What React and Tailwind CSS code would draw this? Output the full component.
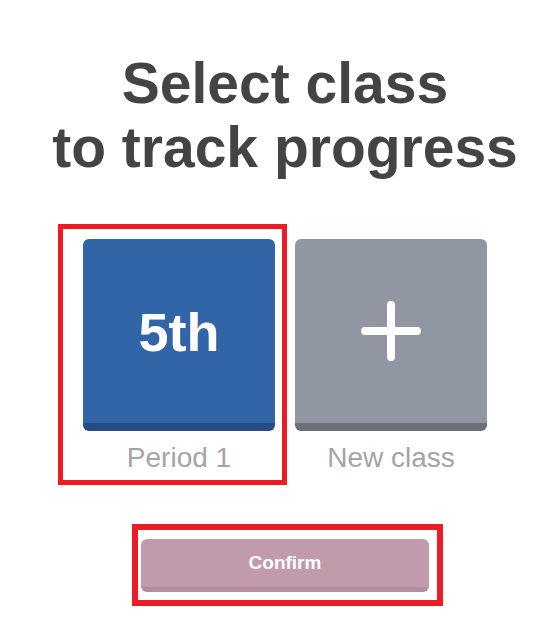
import React from "react";

export default function App() {
  return (
    <div
      className="relative w-full h-[623px] bg-white flex flex-col items-center pl-[13px] overflow-hidden"
      style={{ fontFamily: '"Liberation Sans", Arial, sans-serif' }}
    >
      <h1 className="mt-[51px] text-[57px] leading-[64px] font-bold text-center text-[#444444]">
        Select class
        <br />
        to track progress
      </h1>

      <div className="mt-[60px] flex gap-[20px]">
        <div className="flex flex-col items-center">
          <div className="w-[192px] h-[192px] rounded-[6px] bg-[#3264a8] border-b-[8px] border-[#284b85] flex items-center justify-center">
            <span className="text-white font-bold text-[54px] leading-none mt-[2px]">5th</span>
          </div>
          <div className="mt-[11px] text-[28px] leading-[32px] text-[#a4a4a4]">Period 1</div>
        </div>
        <div className="flex flex-col items-center">
          <div className="w-[192px] h-[192px] rounded-[6px] bg-[#9197a2] border-b-[8px] border-[#6c7078] flex items-center justify-center">
            <svg width="64" height="64" viewBox="0 0 64 64" fill="none" stroke="white" strokeWidth="8" strokeLinecap="round">
              <path d="M32 6v52M6 32h52" />
            </svg>
          </div>
          <div className="mt-[11px] text-[28px] leading-[32px] text-[#a4a4a4]">New class</div>
        </div>
      </div>

      <button className="mt-[65px] w-[288px] h-[53px] rounded-[6px] bg-[#c09bab] border-b-[5px] border-[#b38d9d] text-white font-bold text-[19px] flex items-center justify-center">
        Confirm
      </button>

      <div className="absolute left-[58px] top-[224px] w-[229px] h-[261px] border-[5px] border-[#ed1c24]" />
      <div className="absolute left-[132px] top-[524px] w-[311px] h-[82px] border-[6px] border-[#ed1c24]" />
    </div>
  );
}
